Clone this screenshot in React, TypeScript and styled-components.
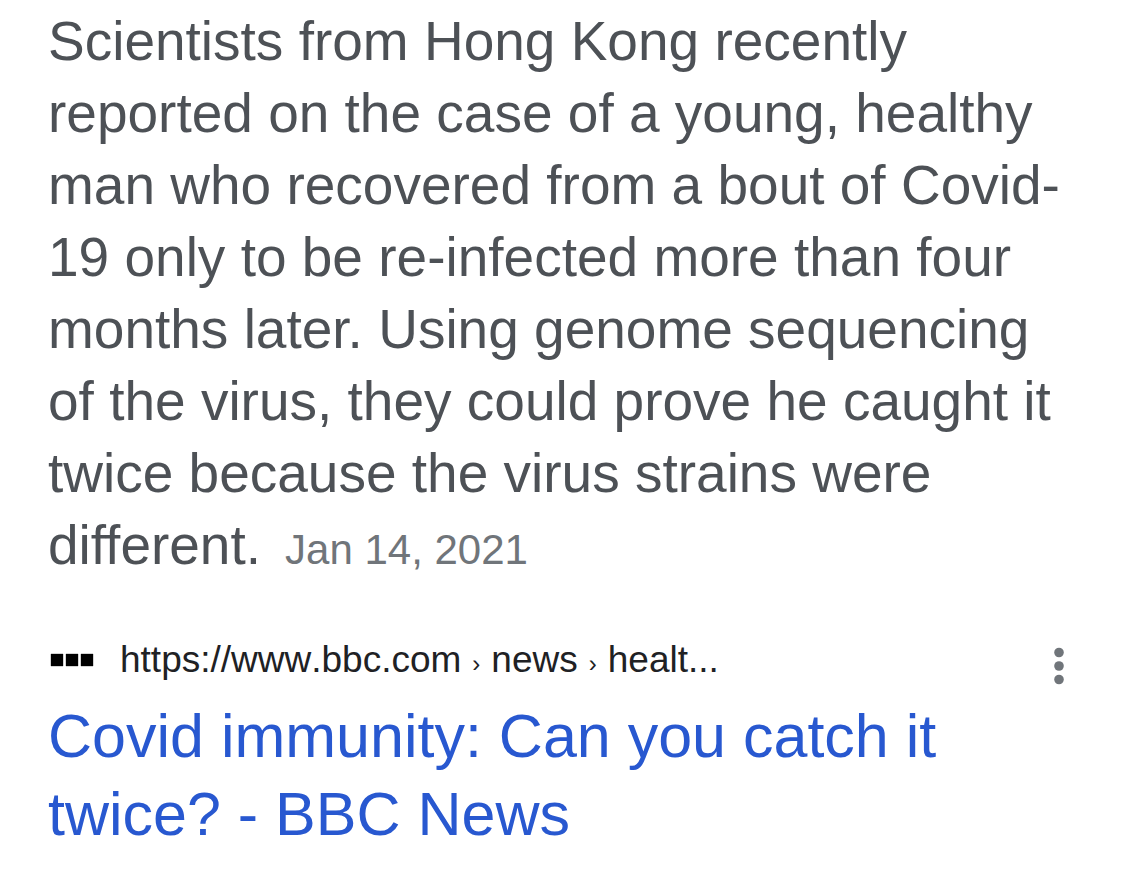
import React from "react";
import styled, { createGlobalStyle } from "styled-components";

const GlobalStyle = createGlobalStyle`
  * { box-sizing: border-box; }
  body {
    margin: 0;
    background: #ffffff;
    font-family: "Liberation Sans", Arial, Helvetica, sans-serif;
  }
`;

const Page = styled.main`
  padding: 5px 48px 16px;
`;

const Snippet = styled.p`
  margin: 0;
  color: #4d5156;
  font-size: 55px;
  line-height: 72px;
`;

const Line = styled.span`
  display: block;
  white-space: nowrap;
`;

const PublishedDate = styled.time`
  margin-left: 24px;
  color: #70757a;
  font-size: 42px;
`;

const Result = styled.article`
  margin-top: 48px;
`;

const SourceRow = styled.div`
  display: flex;
  align-items: flex-start;
  justify-content: space-between;
  height: 63px;
  padding-top: 2px;
`;

const SourceLink = styled.a`
  display: flex;
  align-items: center;
  gap: 24px;
  color: #202124;
  font-size: 37px;
  line-height: 48px;
  text-decoration: none;
  white-space: nowrap;
  font-kerning: none;
`;

const Separator = styled.span`
  margin: 0 11px;
  font-size: 24px;
`;

const Favicon = styled.svg`
  width: 48px;
  height: 48px;
`;

const MenuButton = styled.button`
  display: flex;
  align-items: center;
  justify-content: center;
  padding: 0;
  width: 36px;
  height: 60px;
  border: 0;
  background: none;
  color: #70757a;
`;

const Title = styled.h3`
  margin: 0;
  font-size: 61px;
  font-weight: 400;
  line-height: 78px;
`;

const TitleLink = styled.a`
  color: #2858d0;
  text-decoration: none;
`;

const snippetLines = [
  "Scientists from Hong Kong recently",
  "reported on the case of a young, healthy",
  "man who recovered from a bout of Covid-",
  "19 only to be re-infected more than four",
  "months later. Using genome sequencing",
  "of the virus, they could prove he caught it",
  "twice because the virus strains were",
];

export default function App() {
  return (
    <Page>
      <GlobalStyle />
      <Snippet>
        {snippetLines.map((text) => (
          <Line key={text}>{text}</Line>
        ))}
        <Line>
          different.
          <PublishedDate dateTime="2021-01-14">Jan 14, 2021</PublishedDate>
        </Line>
      </Snippet>
      <Result>
        <SourceRow>
          <SourceLink href="#source">
            <Favicon viewBox="0 0 48 48" aria-hidden="true">
              <path
                d="M3 16h12v12H3zM18 16h12v12H18zM33 16h12v12H33z"
                stroke="#000000"
                strokeOpacity="0.35"
              />
            </Favicon>
            <span>
              https://www.bbc.com<Separator>›</Separator>news
              <Separator>›</Separator>healt...
            </span>
          </SourceLink>
          <MenuButton type="button" aria-label="More options">
            <svg width="12" height="40" viewBox="0 0 12 40" fill="currentColor">
              <circle cx="6" cy="6.5" r="4.8" />
              <circle cx="6" cy="20" r="4.8" />
              <circle cx="6" cy="33.5" r="4.8" />
            </svg>
          </MenuButton>
        </SourceRow>
        <Title>
          <TitleLink href="#article">
            <Line>Covid immunity: Can you catch it</Line>
            <Line>twice? - BBC News</Line>
          </TitleLink>
        </Title>
      </Result>
    </Page>
  );
}
